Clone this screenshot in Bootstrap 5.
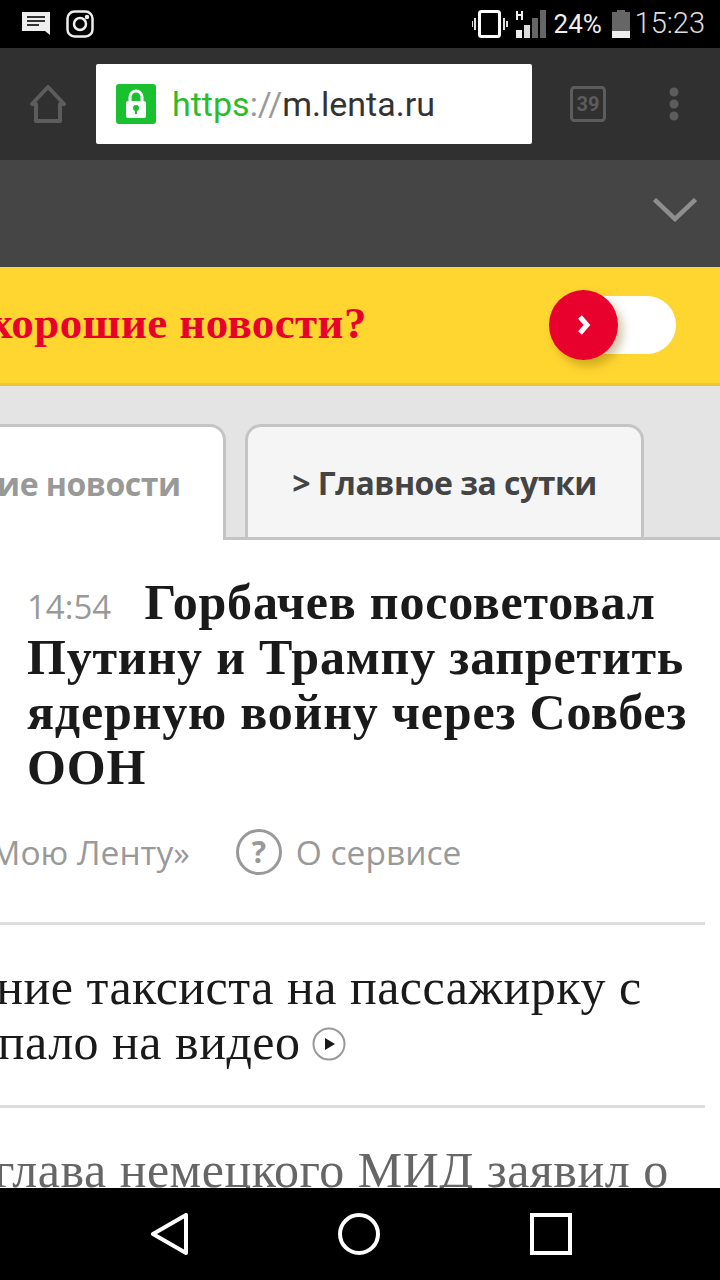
<!DOCTYPE html>
<html lang="ru">
<head>
    <meta charset="UTF-8">
    <meta name="viewport" content="width=device-width, initial-scale=1.0">
    <title>m.lenta.ru</title>
    <link href="https://cdn.jsdelivr.net/npm/bootstrap@5.3.0/dist/css/bootstrap.min.css" rel="stylesheet">
    <style>
        html, body { margin: 0; width: 720px; height: 1280px; overflow: hidden; background: #fff; }

        .phone-screen { width: 720px; height: 1280px; overflow: hidden; }

        /* status bar */
        .status-row { height: 48px; background: #000; padding: 0 14px 0 22px; flex: none; font-family: Roboto, sans-serif; }
        .status-pct { color: #eee; font-size: 26px; margin-left: 8px; width: 50px; }
        .status-clock { color: #ddd; font-size: 29px; font-weight: 300; margin-left: 5px; }
        .status-gap { margin-left: 15px; }
        .status-sig { margin-left: 8px; }
        .status-batt { margin-left: 8px; }
        .status-right { margin-right: 1px; }

        /* browser toolbar */
        .browser-row { height: 112px; background: #303030; flex: none; padding-left: 30px; }
        .url-box { width: 436px; height: 80px; background: #fff; border-radius: 2px; margin-left: 30px; padding-left: 20px; font-family: Roboto, sans-serif; font-size: 34px; color: #333; }
        .url-lock { width: 40px; height: 40px; background: #19c12e; border-radius: 3px; margin-right: 16px; }
        .url-green { color: #2bbb2b; }
        .url-grey { color: #999; }
        .tab-count { margin-left: 38px; }
        .menu-dots { margin-left: 63px; }

        .grey-strip { height: 107px; background: #454545; flex: none; padding-right: 23px; padding-bottom: 8px; }

        /* yellow banner */
        .promo-band { height: 119px; background: #ffd630; border-bottom: 3px solid #eec53a; flex: none; padding-right: 44px; }
        .promo-text { font-family: "Liberation Serif", serif; font-weight: 700; font-size: 45px; color: #e8012c; white-space: nowrap; margin: 0 0 3px -167px; letter-spacing: .4px; }
        .promo-switch { position: relative; width: 86px; height: 58px; background: #fff; border-radius: 0 29px 29px 0; }
        .promo-knob { position: absolute; left: -41px; top: -6px; width: 69px; height: 70px; border-radius: 50%; background: #e8012c; box-shadow: 5px 6px 10px rgba(120, 90, 0, .35); }

        /* tabs */
        .tabs-area { height: 154px; background: #e4e4e4; flex: none; padding-top: 38px; border-bottom: 3px solid #c4c4c4; }
        .tabs-area .nav-link { font-family: "Open Sans", sans-serif; font-weight: 700; font-size: 32px; letter-spacing: -.5px; border: 3px solid #c4c4c4; border-bottom: 0; border-radius: 16px 16px 0 0; white-space: nowrap; }
        .tabs-area .tab-current { height: 116px; width: 399px; margin-left: -173px; padding: 0 14px 0 0; background: #fff; color: #999; }
        .tabs-area .tab-other { height: 113px; width: 399px; margin-left: 19px; padding: 2px 0 0 0; background: #f5f5f5; color: #444; }

        /* news list */
        .news-list { flex: 1 1 0; min-height: 0; overflow: hidden; background: #fff; }
        .top-story { padding: 35px 0 0 27px; height: 385px; border-bottom: 3px solid #ddd; margin-right: 15px; }
        .top-head { font-family: "Liberation Serif", serif; font-weight: 700; font-size: 50px; line-height: 55px; letter-spacing: .8px; color: #1a1a1a; margin: 0; }
        .top-time { font-family: "Open Sans", sans-serif; font-weight: 400; font-size: 33px; line-height: 1; letter-spacing: 0; color: #999; margin-right: 20px; }
        .story-meta { font-family: "Open Sans", sans-serif; font-size: 33.500px; color: #999; margin: 32px 0 0 -253px; white-space: nowrap; }
        .help-mark { margin: 0 14px 0 46px; }
        .news-item { font-family: "Liberation Serif", serif; font-size: 50px; line-height: 55px; letter-spacing: .5px; color: #1a1a1a; white-space: nowrap; border-bottom: 3px solid #ddd; margin-right: 15px; height: 183px; padding-top: 35px; }
        .line-one { margin-left: -161px; }
        .line-two { margin-left: -55px; }
        .play-mark { margin-left: -2px; vertical-align: -2px; }
        .news-fade { color: #666; border: 0; margin-left: -103px; }

        /* android nav */
        .nav-keys { height: 92px; background: #000; flex: none; padding: 25px 0 0 1px; gap: 150px; }
    </style>
</head>
<body>
<div class="phone-screen d-flex flex-column">

    <div class="status-row d-flex align-items-center">
        <svg width="29" height="26" viewBox="0 0 29 26"><path d="M0 1h28v23l-5-4H0z" fill="#eee"/><path d="M5 6h18M5 10h18M5 14h12" stroke="#333" stroke-width="2"/></svg>
        <svg class="status-gap" width="28" height="28" viewBox="0 0 28 28" fill="none" stroke="#eee" stroke-width="2.500"><rect x="1.500" y="1.500" width="25" height="25" rx="7"/><circle cx="14" cy="14" r="6"/><circle cx="21" cy="7" r="1" fill="#eee"/></svg>
        <div class="ms-auto d-flex align-items-center status-right">
            <svg width="36" height="28" viewBox="0 0 36 28"><rect x="7.500" y="1.500" width="20" height="25" rx="2" fill="none" stroke="#fff" stroke-width="3"/><path d="M3 8v12M0 11v6M32 8v12M35 11v6" stroke="#ddd" stroke-width="2"/></svg>
            <svg class="status-sig" width="30" height="28" viewBox="0 0 30 28"><path d="M0 20h6v8H0z" fill="#eee"/><path d="M8 15h6v13H8z" fill="#ddd"/><path d="M16 8h6v20h-6z" fill="#666"/><path d="M24 0h6v28h-6z" fill="#666"/><path d="M1 1v9M6 1v9M1 5h5" stroke="#eee" stroke-width="2" fill="none"/></svg>
            <span class="status-pct">24%</span>
            <svg class="status-batt" width="18" height="28" viewBox="0 0 18 28"><path d="M5 0h8v2h5v26H0V2h5z" fill="#666"/><path d="M0 21h18v7H0z" fill="#eee"/></svg>
            <span class="status-clock">15:23</span>
        </div>
    </div>

    <div class="browser-row d-flex align-items-center">
        <svg width="36" height="38" viewBox="0 0 36 38" fill="none" stroke="#5c5c5c" stroke-width="4" stroke-linejoin="round"><path d="M2 19 18 2 34 19h-4v17H6V19z"/></svg>
        <div class="url-box d-flex align-items-center">
            <span class="url-lock d-flex align-items-center justify-content-center">
                <svg width="24" height="30" viewBox="0 0 24 30"><path d="M6 13V8a6 6 0 0 1 12 0v5" fill="none" stroke="#fff" stroke-width="3"/><rect x="2" y="12" width="20" height="17" rx="2" fill="#fff"/><circle cx="12" cy="19" r="3" fill="#19c12e"/><path d="M11 20h2v5h-2z" fill="#19c12e"/></svg>
            </span>
            <span><span class="url-green">https</span><span class="url-grey">://</span>m.lenta.ru</span>
        </div>
        <svg class="tab-count" width="36" height="36" viewBox="0 0 36 36"><rect x="1.500" y="1.500" width="33" height="33" rx="3" fill="none" stroke="#5c5c5c" stroke-width="3"/><text x="18" y="25" text-anchor="middle" font-family="Roboto, sans-serif" font-weight="700" font-size="20" fill="#5c5c5c">39</text></svg>
        <svg class="menu-dots" width="10" height="34" viewBox="0 0 10 34" fill="#5c5c5c"><circle cx="5" cy="5" r="4.500"/><circle cx="5" cy="17" r="4.500"/><circle cx="5" cy="29" r="4.500"/></svg>
    </div>

    <div class="grey-strip d-flex justify-content-end align-items-center">
        <svg width="44" height="24" viewBox="0 0 44 24" fill="none" stroke="#8e8e8e" stroke-width="4.500"><path d="M1.500 1.500 22 21 42.500 1.500"/></svg>
    </div>

    <div class="promo-band d-flex align-items-center justify-content-between">
        <span class="promo-text">Хотите хорошие новости?</span>
        <div class="promo-switch">
            <div class="promo-knob d-flex align-items-center justify-content-center">
                <svg width="14" height="20" viewBox="0 0 14 20" fill="none" stroke="#fff" stroke-width="5"><path d="M3 2l7 8-7 8"/></svg>
            </div>
        </div>
    </div>

    <div class="tabs-area d-flex">
        <a class="nav-link tab-current d-flex align-items-center justify-content-center">Последние новости</a>
        <a class="nav-link tab-other d-flex align-items-center justify-content-center">&gt; Главное за сутки</a>
    </div>

    <div class="news-list">
        <div class="top-story">
            <h1 class="top-head"><span class="top-time">14:54</span> Горбачев посоветовал Путину и Трампу запретить ядерную войну через Совбез ООН</h1>
            <div class="story-meta d-flex align-items-center">
                <span>Включить в «Мою Ленту»</span>
                <svg class="help-mark" width="46" height="46" viewBox="0 0 46 46"><circle cx="23" cy="23" r="21.500" fill="none" stroke="#999" stroke-width="3"/><text x="23" y="34" text-anchor="middle" font-family="Open Sans, sans-serif" font-weight="700" font-size="30" fill="#999">?</text></svg>
                <span>О сервисе</span>
            </div>
        </div>
        <div class="news-item">
            <div class="line-one">Нападение таксиста на пассажирку с</div>
            <div class="line-two">попало на видео
                <svg class="play-mark" width="34" height="34" viewBox="0 0 34 34"><circle cx="17" cy="17" r="15.500" fill="none" stroke="#999" stroke-width="2"/><path d="M13 11l10 6-10 6z" fill="#1a1a1a"/></svg>
            </div>
        </div>
        <div class="news-item news-fade">Экс-глава немецкого МИД заявил о</div>
    </div>

    <div class="nav-keys d-flex justify-content-center">
        <svg width="38" height="42" viewBox="0 0 38 42" fill="none" stroke="#fff" stroke-width="4" stroke-linejoin="round"><path d="M36 2v38L3 21z"/></svg>
        <svg width="42" height="42" viewBox="0 0 42 42" fill="none" stroke="#fff" stroke-width="4"><circle cx="21" cy="21" r="19"/></svg>
        <svg width="42" height="42" viewBox="0 0 42 42" fill="none" stroke="#fff" stroke-width="4"><rect x="2" y="2" width="38" height="38"/></svg>
    </div>
</div>
<script src="https://cdn.jsdelivr.net/npm/bootstrap@5.3.0/dist/js/bootstrap.bundle.min.js"></script>
</body>
</html>
